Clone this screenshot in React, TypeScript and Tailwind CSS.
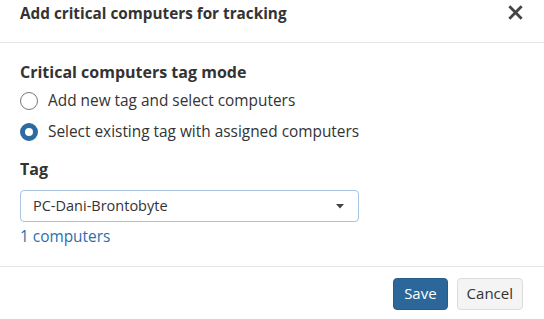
import React, { useState } from 'react';

export default function App() {
  const [mode, setMode] = useState<'new' | 'existing'>('existing');

  return (
    <div className="w-[544px] h-[319px] bg-white text-[#333] font-['Open_Sans',sans-serif] text-[15.4px] flex flex-col">
      {/* Header */}
      <div className="h-[43px] border-b border-[#e5e5e5] flex items-start justify-between pl-[20px] pr-[20px] pt-[1px]">
        <h2 className="text-[15.3px] font-bold leading-[24px] text-[#333]">Add critical computers for tracking</h2>
        <button className="mt-[4px] mr-[1px] text-[#444]">
          <svg className="w-[15px] h-[15px]" viewBox="0 0 16 16">
            <path d="M2.5 2.5l11 11M13.5 2.5l-11 11" stroke="currentColor" strokeWidth={3} strokeLinecap="square" />
          </svg>
        </button>
      </div>

      {/* Body */}
      <div className="flex-1 px-[20px] pt-[19px] border-b border-[#e5e5e5]">
        <div className="text-[16px] font-bold leading-[21px]">Critical computers tag mode</div>
        <div className="mt-[8px] flex flex-col gap-[11px]">
          <label className="flex items-center gap-[10px] leading-[20px] cursor-pointer" onClick={() => setMode('new')}>
            <span className={`w-[18px] h-[18px] rounded-full ${mode === 'new' ? 'border-[5px] border-[#2c6aa0]' : 'border border-[#777]'}`} />
            Add new tag and select computers
          </label>
          <label className="flex items-center gap-[10px] leading-[20px] cursor-pointer" onClick={() => setMode('existing')}>
            <span className={`w-[18px] h-[18px] rounded-full ${mode === 'existing' ? 'border-[5px] border-[#2c6aa0]' : 'border border-[#777]'}`} />
            Select existing tag with assigned computers
          </label>
        </div>

        <div className="mt-[17px] text-[16px] font-bold leading-[21px]">Tag</div>
        <div className="mt-[10px] w-[339px] h-[32px] border border-[#a9c4e3] rounded-[4px] flex items-center justify-between pl-[12px] pr-[14px]">
          <span className="text-[14.5px]">PC-Dani-Brontobyte</span>
          <svg className="w-[8px] h-[5px]" viewBox="0 0 8 5">
            <path d="M0 0h8L4 4.5z" fill="#444" />
          </svg>
        </div>
        <a className="block mt-[5px] text-[#2a6fae] leading-[20px]">1 computers</a>
      </div>

      {/* Footer */}
      <div className="h-[52px] flex items-center justify-end gap-[9px] pr-[21px] pt-[1px] text-[15px]">
        <button className="h-[32px] px-[10px] rounded-[4px] bg-[#2b6799] border border-[#255d8c] text-white">Save</button>
        <button className="h-[32px] px-[9px] rounded-[4px] bg-[#f4f4f4] border border-[#dcdcdc] text-[#333]">Cancel</button>
      </div>
    </div>
  );
}
